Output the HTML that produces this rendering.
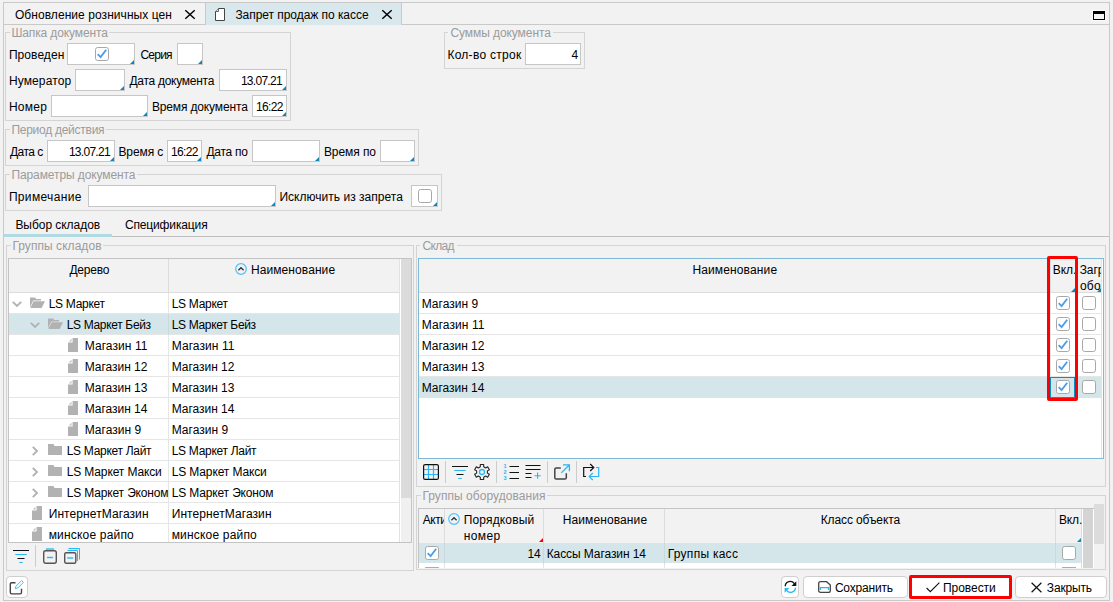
<!DOCTYPE html>
<html lang="ru"><head><meta charset="utf-8"><title>Запрет продаж по кассе</title>
<style>
html,body{margin:0;padding:0;background:#f2f2f2}
body{width:1113px;height:602px;background:#f2f2f2;position:relative;overflow:hidden;font-family:"Liberation Sans",sans-serif;font-size:12px;line-height:16px}
body div,body svg,.t{position:absolute}
.t{white-space:nowrap;display:block}
svg{overflow:visible}
</style></head><body>
<div style="left:3px;top:2px;width:1107px;height:599px;border:1px solid #c9c9c9;box-sizing:border-box"></div>
<div style="left:4px;top:24px;width:1105px;height:1px;background:#c9c9c9"></div>
<div style="left:205px;top:3px;width:1px;height:21px;background:#c9c9c9"></div>
<div style="left:401px;top:3px;width:1px;height:21px;background:#c9c9c9"></div>
<div style="left:206px;top:3px;width:195px;height:22px;background:#d8e8ed"></div>
<span id="t1" class="t" style="left:14.90px;top:6.84px;color:#000;letter-spacing:0.065px;">Обновление розничных цен</span>
<svg style="left:184px;top:9px" width="12" height="11" viewBox="0 0 12 11"><path d="M1.3 1.3L10.7 9.7M10.7 1.3L1.3 9.7" stroke="#000" stroke-width="1.45" fill="none"/></svg>
<svg style="left:215px;top:8px" width="10" height="13" viewBox="0 0 10 13"><path d="M3.5 0.5H9.5V12.5H0.5V3.5Z" fill="#fff" stroke="#444"/><path d="M0.5 3.5H3.5V0.5" fill="#ddd" stroke="#444" stroke-width="0.8"/></svg>
<span id="t2" class="t" style="left:235.40px;top:6.84px;color:#000;letter-spacing:-0.048px;">Запрет продаж по кассе</span>
<svg style="left:381px;top:9px" width="12" height="11" viewBox="0 0 12 11"><path d="M1.3 1.3L10.7 9.7M10.7 1.3L1.3 9.7" stroke="#000" stroke-width="1.45" fill="none"/></svg>
<div style="left:1093px;top:11px;width:12px;height:9px;border:1px solid #000;border-top:3px solid #000;box-sizing:border-box;background:#f6f6f6;box-shadow:0 0 0 1px #fafafa"></div>
<div style="left:5px;top:32px;width:286px;height:89px;border:1px solid #d4d4d4;box-sizing:border-box"></div>
<div style="left:10px;top:32px;width:99.3px;height:1px;background:#f2f2f2"></div>
<span id="t3" class="t" style="left:11.40px;top:24.84px;color:#9b9b9b;letter-spacing:-0.121px;">Шапка документа</span>
<span id="t4" class="t" style="left:8.90px;top:46.84px;color:#000;letter-spacing:0.071px;">Проведен</span>
<div style="left:67px;top:43px;width:68px;height:22px;border:1px solid #c6c6c6;box-sizing:border-box;background:#fff"></div>
<svg style="left:130px;top:60px" width="4" height="4" viewBox="0 0 4 4"><path d="M4 0V4H0Z" fill="#0c86c3"/></svg>
<svg style="left:95px;top:47px" width="14" height="14" viewBox="0 0 14 14"><rect x="0.5" y="0.5" width="13" height="13" rx="2.2" fill="#fff" stroke="#a8a8a8"/><path d="M2.7 7.2L5.6 10.1L11.2 2.8" fill="none" stroke="#4a9eea" stroke-width="1.85"/></svg>
<span id="t5" class="t" style="left:140.40px;top:46.84px;color:#000;letter-spacing:-0.750px;">Серия</span>
<div style="left:177px;top:43px;width:26px;height:22px;border:1px solid #c6c6c6;box-sizing:border-box;background:#fff"></div>
<svg style="left:198px;top:60px" width="4" height="4" viewBox="0 0 4 4"><path d="M4 0V4H0Z" fill="#0c86c3"/></svg>
<span id="t6" class="t" style="left:8.90px;top:72.84px;color:#000;letter-spacing:0.125px;">Нумератор</span>
<div style="left:75px;top:69px;width:50px;height:22px;border:1px solid #c6c6c6;box-sizing:border-box;background:#fff"></div>
<svg style="left:120px;top:86px" width="4" height="4" viewBox="0 0 4 4"><path d="M4 0V4H0Z" fill="#0c86c3"/></svg>
<span id="t7" class="t" style="left:129.40px;top:72.84px;color:#000;letter-spacing:-0.269px;">Дата документа</span>
<div style="left:219px;top:69px;width:68px;height:22px;border:1px solid #c6c6c6;box-sizing:border-box;background:#fff"></div>
<svg style="left:282px;top:86px" width="4" height="4" viewBox="0 0 4 4"><path d="M4 0V4H0Z" fill="#0c86c3"/></svg>
<span id="t8" class="t" style="left:240.90px;top:72.84px;color:#000;letter-spacing:-0.714px;">13.07.21</span>
<span id="t9" class="t" style="left:8.90px;top:98.84px;color:#000;letter-spacing:0.250px;">Номер</span>
<div style="left:51px;top:95px;width:97px;height:22px;border:1px solid #c6c6c6;box-sizing:border-box;background:#fff"></div>
<svg style="left:143px;top:112px" width="4" height="4" viewBox="0 0 4 4"><path d="M4 0V4H0Z" fill="#0c86c3"/></svg>
<span id="t10" class="t" style="left:151.90px;top:98.84px;color:#000;letter-spacing:-0.143px;">Время документа</span>
<div style="left:252px;top:95px;width:35px;height:22px;border:1px solid #c6c6c6;box-sizing:border-box;background:#fff"></div>
<svg style="left:282px;top:112px" width="4" height="4" viewBox="0 0 4 4"><path d="M4 0V4H0Z" fill="#0c86c3"/></svg>
<span id="t11" class="t" style="left:255.90px;top:98.84px;color:#000;letter-spacing:-0.625px;">16:22</span>
<div style="left:444px;top:32px;width:141px;height:37px;border:1px solid #d4d4d4;box-sizing:border-box"></div>
<div style="left:448px;top:32px;width:105px;height:1px;background:#f2f2f2"></div>
<span id="t12" class="t" style="left:450.40px;top:24.84px;color:#9b9b9b;letter-spacing:-0.071px;">Суммы документа</span>
<span id="t13" class="t" style="left:447.40px;top:46.84px;color:#000;letter-spacing:0.273px;">Кол-во строк</span>
<div style="left:525px;top:43px;width:56px;height:22px;border:1px solid #c6c6c6;box-sizing:border-box;background:#fff"></div>
<span id="t14" class="t" style="left:571.40px;top:46.84px;color:#000;">4</span>
<div style="left:5px;top:129px;width:414px;height:37px;border:1px solid #d4d4d4;box-sizing:border-box"></div>
<div style="left:10px;top:129px;width:96.3px;height:1px;background:#f2f2f2"></div>
<span id="t15" class="t" style="left:11.40px;top:121.84px;color:#9b9b9b;letter-spacing:-0.264px;">Период действия</span>
<span id="t16" class="t" style="left:9.90px;top:143.84px;color:#000;letter-spacing:-0.500px;">Дата с</span>
<div style="left:47px;top:140px;width:68px;height:22px;border:1px solid #c6c6c6;box-sizing:border-box;background:#fff"></div>
<svg style="left:110px;top:157px" width="4" height="4" viewBox="0 0 4 4"><path d="M4 0V4H0Z" fill="#0c86c3"/></svg>
<span id="t17" class="t" style="left:68.90px;top:143.84px;color:#000;letter-spacing:-0.714px;">13.07.21</span>
<span id="t18" class="t" style="left:118.40px;top:143.84px;color:#000;letter-spacing:-0.083px;">Время с</span>
<div style="left:167px;top:140px;width:35px;height:22px;border:1px solid #c6c6c6;box-sizing:border-box;background:#fff"></div>
<svg style="left:197px;top:157px" width="4" height="4" viewBox="0 0 4 4"><path d="M4 0V4H0Z" fill="#0c86c3"/></svg>
<span id="t19" class="t" style="left:170.90px;top:143.84px;color:#000;letter-spacing:-0.625px;">16:22</span>
<span id="t20" class="t" style="left:206.40px;top:143.84px;color:#000;letter-spacing:-0.250px;">Дата по</span>
<div style="left:252px;top:140px;width:68px;height:22px;border:1px solid #c6c6c6;box-sizing:border-box;background:#fff"></div>
<svg style="left:315px;top:157px" width="4" height="4" viewBox="0 0 4 4"><path d="M4 0V4H0Z" fill="#0c86c3"/></svg>
<span id="t21" class="t" style="left:323.90px;top:143.84px;color:#000;letter-spacing:-0.071px;">Время по</span>
<div style="left:380px;top:140px;width:35px;height:22px;border:1px solid #c6c6c6;box-sizing:border-box;background:#fff"></div>
<svg style="left:410px;top:157px" width="4" height="4" viewBox="0 0 4 4"><path d="M4 0V4H0Z" fill="#0c86c3"/></svg>
<div style="left:5px;top:174px;width:437px;height:37px;border:1px solid #d4d4d4;box-sizing:border-box"></div>
<div style="left:10px;top:174px;width:127.30000000000001px;height:1px;background:#f2f2f2"></div>
<span id="t22" class="t" style="left:11.40px;top:166.84px;color:#9b9b9b;letter-spacing:-0.094px;">Параметры документа</span>
<span id="t23" class="t" style="left:8.90px;top:188.84px;color:#000;letter-spacing:0.333px;">Примечание</span>
<div style="left:88px;top:185px;width:188px;height:22px;border:1px solid #c6c6c6;box-sizing:border-box;background:#fff"></div>
<svg style="left:271px;top:202px" width="4" height="4" viewBox="0 0 4 4"><path d="M4 0V4H0Z" fill="#0c86c3"/></svg>
<span id="t24" class="t" style="left:279.40px;top:188.84px;color:#000;letter-spacing:0.026px;">Исключить из запрета</span>
<div style="left:411px;top:185px;width:27px;height:22px;border:1px solid #c6c6c6;box-sizing:border-box;background:#fff"></div>
<svg style="left:433px;top:202px" width="4" height="4" viewBox="0 0 4 4"><path d="M4 0V4H0Z" fill="#0c86c3"/></svg>
<svg style="left:418px;top:189px" width="14" height="14" viewBox="0 0 14 14"><rect x="0.5" y="0.5" width="13" height="13" rx="2.2" fill="#fff" stroke="#a8a8a8"/></svg>
<span id="t25" class="t" style="left:15.40px;top:216.84px;color:#000;letter-spacing:-0.042px;">Выбор складов</span>
<span id="t26" class="t" style="left:124.90px;top:216.84px;color:#000;letter-spacing:-0.136px;">Спецификация</span>
<div style="left:4px;top:236px;width:1105px;height:1px;background:#bfbfbf"></div>
<div style="left:4px;top:234px;width:108px;height:3px;background:#b0dbe2"></div>
<div style="left:6px;top:245px;width:408px;height:326px;border:1px solid #d4d4d4;box-sizing:border-box"></div>
<div style="left:11px;top:245px;width:91.7px;height:1px;background:#f2f2f2"></div>
<span id="t27" class="t" style="left:12.40px;top:237.84px;color:#9b9b9b;letter-spacing:0.054px;">Группы складов</span>
<div style="left:8px;top:258px;width:404px;height:285px;background:#fff;border:1px solid #c4c4c4;box-sizing:border-box"></div>
<div style="left:9px;top:259px;width:390px;height:34px;background:#f2f2f2"></div>
<div style="left:399px;top:259px;width:1px;height:283px;background:#e2e2e2"></div>
<div style="left:9px;top:292px;width:390px;height:1px;background:#dcdcdc"></div>
<div style="left:168px;top:259px;width:1px;height:34px;background:#dcdcdc"></div>
<span id="t28" class="t" style="left:69.40px;top:261.84px;color:#000;letter-spacing:-0.200px;">Дерево</span>
<svg style="left:235px;top:263px" width="12" height="12" viewBox="0 0 12 12"><circle cx="6" cy="6" r="5.3" fill="none" stroke="#4fc3f7" stroke-width="1.2"/><path d="M3.4 7.3L6 4.7L8.6 7.3" fill="none" stroke="#333" stroke-width="1.3"/></svg>
<span id="t29" class="t" style="left:250.90px;top:261.84px;color:#000;letter-spacing:0.091px;">Наименование</span>
<div style="left:401px;top:259px;width:10px;height:283px;background:#f0f0f0"></div>
<div style="left:401px;top:259px;width:10px;height:239px;background:#dbdbdb"></div>
<div style="left:9px;top:313px;width:390px;height:1px;background:#e6e6e6"></div>
<div style="left:168px;top:293px;width:1px;height:21px;background:#e6e6e6"></div>
<svg style="left:11.5px;top:301px" width="10" height="7" viewBox="0 0 10 7"><path d="M0.8 0.8L5 5L9.2 0.8" fill="none" stroke="#b2b2b2" stroke-width="1.9"/></svg>
<svg style="left:30px;top:297px" width="15" height="11" viewBox="0 0 15 11"><path d="M0 0.5H5L6.3 2H11V3.6H3.2L0 10.2Z" fill="#b2b2b2"/><path d="M3.6 4.2H15L11.6 11H0.3Z" fill="#b2b2b2"/></svg>
<span id="t30" class="t" style="left:48.70px;top:295.84px;color:#000;letter-spacing:-0.287px;">LS Маркет</span>
<span id="t31" class="t" style="left:171.70px;top:295.84px;color:#000;letter-spacing:-0.288px;">LS Маркет</span>
<div style="left:9px;top:314px;width:390px;height:21px;background:#d5e6eb"></div>
<div style="left:9px;top:334px;width:390px;height:1px;background:#e6e6e6"></div>
<div style="left:168px;top:314px;width:1px;height:21px;background:#c8dade"></div>
<svg style="left:29.5px;top:322px" width="10" height="7" viewBox="0 0 10 7"><path d="M0.8 0.8L5 5L9.2 0.8" fill="none" stroke="#b2b2b2" stroke-width="1.9"/></svg>
<svg style="left:48px;top:318px" width="15" height="11" viewBox="0 0 15 11"><path d="M0 0.5H5L6.3 2H11V3.6H3.2L0 10.2Z" fill="#b2b2b2"/><path d="M3.6 4.2H15L11.6 11H0.3Z" fill="#b2b2b2"/></svg>
<span id="t32" class="t" style="left:66.70px;top:316.84px;color:#000;letter-spacing:-0.331px;">LS Маркет Бейз</span>
<span id="t33" class="t" style="left:171.70px;top:316.84px;color:#000;letter-spacing:-0.331px;">LS Маркет Бейз</span>
<div style="left:9px;top:355px;width:390px;height:1px;background:#e6e6e6"></div>
<div style="left:168px;top:335px;width:1px;height:21px;background:#e6e6e6"></div>
<svg style="left:68px;top:338px" width="10" height="14" viewBox="0 0 10 14"><path d="M4.6 0H10V14H0V4.6H4.6Z" fill="#b2b2b2"/><path d="M3.6 0.7V3.6H0.7Z" fill="#c4c4c4"/></svg>
<span id="t34" class="t" style="left:84.70px;top:337.84px;color:#000;letter-spacing:0.078px;">Магазин 11</span>
<span id="t35" class="t" style="left:171.70px;top:337.84px;color:#000;letter-spacing:0.078px;">Магазин 11</span>
<div style="left:9px;top:376px;width:390px;height:1px;background:#e6e6e6"></div>
<div style="left:168px;top:356px;width:1px;height:21px;background:#e6e6e6"></div>
<svg style="left:68px;top:359px" width="10" height="14" viewBox="0 0 10 14"><path d="M4.6 0H10V14H0V4.6H4.6Z" fill="#b2b2b2"/><path d="M3.6 0.7V3.6H0.7Z" fill="#c4c4c4"/></svg>
<span id="t36" class="t" style="left:84.70px;top:358.84px;color:#000;letter-spacing:-0.033px;">Магазин 12</span>
<span id="t37" class="t" style="left:171.70px;top:358.84px;color:#000;letter-spacing:-0.033px;">Магазин 12</span>
<div style="left:9px;top:397px;width:390px;height:1px;background:#e6e6e6"></div>
<div style="left:168px;top:377px;width:1px;height:21px;background:#e6e6e6"></div>
<svg style="left:68px;top:380px" width="10" height="14" viewBox="0 0 10 14"><path d="M4.6 0H10V14H0V4.6H4.6Z" fill="#b2b2b2"/><path d="M3.6 0.7V3.6H0.7Z" fill="#c4c4c4"/></svg>
<span id="t38" class="t" style="left:84.70px;top:379.84px;color:#000;letter-spacing:-0.033px;">Магазин 13</span>
<span id="t39" class="t" style="left:171.70px;top:379.84px;color:#000;letter-spacing:-0.033px;">Магазин 13</span>
<div style="left:9px;top:418px;width:390px;height:1px;background:#e6e6e6"></div>
<div style="left:168px;top:398px;width:1px;height:21px;background:#e6e6e6"></div>
<svg style="left:68px;top:401px" width="10" height="14" viewBox="0 0 10 14"><path d="M4.6 0H10V14H0V4.6H4.6Z" fill="#b2b2b2"/><path d="M3.6 0.7V3.6H0.7Z" fill="#c4c4c4"/></svg>
<span id="t40" class="t" style="left:84.70px;top:400.84px;color:#000;letter-spacing:-0.033px;">Магазин 14</span>
<span id="t41" class="t" style="left:171.70px;top:400.84px;color:#000;letter-spacing:-0.033px;">Магазин 14</span>
<div style="left:9px;top:439px;width:390px;height:1px;background:#e6e6e6"></div>
<div style="left:168px;top:419px;width:1px;height:21px;background:#e6e6e6"></div>
<svg style="left:68px;top:422px" width="10" height="14" viewBox="0 0 10 14"><path d="M4.6 0H10V14H0V4.6H4.6Z" fill="#b2b2b2"/><path d="M3.6 0.7V3.6H0.7Z" fill="#c4c4c4"/></svg>
<span id="t42" class="t" style="left:84.70px;top:421.84px;color:#000;letter-spacing:0.025px;">Магазин 9</span>
<span id="t43" class="t" style="left:171.70px;top:421.84px;color:#000;letter-spacing:0.025px;">Магазин 9</span>
<div style="left:9px;top:460px;width:390px;height:1px;background:#e6e6e6"></div>
<div style="left:168px;top:440px;width:1px;height:21px;background:#e6e6e6"></div>
<svg style="left:32px;top:446px" width="7" height="10" viewBox="0 0 7 10"><path d="M0.8 0.8L5 5L0.8 9.2" fill="none" stroke="#b2b2b2" stroke-width="1.9"/></svg>
<svg style="left:48px;top:444px" width="14" height="11" viewBox="0 0 14 11"><path d="M0 0H5.5L6.5 2H14V11H0Z" fill="#b2b2b2"/></svg>
<span id="t44" class="t" style="left:66.70px;top:442.84px;color:#000;letter-spacing:-0.292px;">LS Маркет Лайт</span>
<span id="t45" class="t" style="left:171.70px;top:442.84px;color:#000;letter-spacing:-0.292px;">LS Маркет Лайт</span>
<div style="left:9px;top:481px;width:390px;height:1px;background:#e6e6e6"></div>
<div style="left:168px;top:461px;width:1px;height:21px;background:#e6e6e6"></div>
<svg style="left:32px;top:467px" width="7" height="10" viewBox="0 0 7 10"><path d="M0.8 0.8L5 5L0.8 9.2" fill="none" stroke="#b2b2b2" stroke-width="1.9"/></svg>
<svg style="left:48px;top:465px" width="14" height="11" viewBox="0 0 14 11"><path d="M0 0H5.5L6.5 2H14V11H0Z" fill="#b2b2b2"/></svg>
<span id="t46" class="t" style="left:66.70px;top:463.84px;color:#000;letter-spacing:-0.129px;">LS Маркет Макси</span>
<span id="t47" class="t" style="left:171.70px;top:463.84px;color:#000;letter-spacing:-0.129px;">LS Маркет Макси</span>
<div style="left:9px;top:502px;width:390px;height:1px;background:#e6e6e6"></div>
<div style="left:168px;top:482px;width:1px;height:21px;background:#e6e6e6"></div>
<svg style="left:32px;top:488px" width="7" height="10" viewBox="0 0 7 10"><path d="M0.8 0.8L5 5L0.8 9.2" fill="none" stroke="#b2b2b2" stroke-width="1.9"/></svg>
<svg style="left:48px;top:486px" width="14" height="11" viewBox="0 0 14 11"><path d="M0 0H5.5L6.5 2H14V11H0Z" fill="#b2b2b2"/></svg>
<span id="t48" class="t" style="left:66.70px;top:484.84px;color:#000;letter-spacing:-0.153px;">LS Маркет Эконом</span>
<span id="t49" class="t" style="left:171.70px;top:484.84px;color:#000;letter-spacing:-0.153px;">LS Маркет Эконом</span>
<div style="left:9px;top:523px;width:390px;height:1px;background:#e6e6e6"></div>
<div style="left:168px;top:503px;width:1px;height:21px;background:#e6e6e6"></div>
<svg style="left:32px;top:506px" width="10" height="14" viewBox="0 0 10 14"><path d="M4.6 0H10V14H0V4.6H4.6Z" fill="#b2b2b2"/><path d="M3.6 0.7V3.6H0.7Z" fill="#c4c4c4"/></svg>
<span id="t50" class="t" style="left:48.70px;top:505.84px;color:#000;letter-spacing:0.086px;">ИнтернетМагазин</span>
<span id="t51" class="t" style="left:171.70px;top:505.84px;color:#000;letter-spacing:0.086px;">ИнтернетМагазин</span>
<div style="left:168px;top:524px;width:1px;height:18px;background:#e6e6e6"></div>
<svg style="left:32px;top:527px" width="10" height="14" viewBox="0 0 10 14"><path d="M4.6 0H10V14H0V4.6H4.6Z" fill="#b2b2b2"/><path d="M3.6 0.7V3.6H0.7Z" fill="#c4c4c4"/></svg>
<span id="t52" class="t" style="left:48.70px;top:526.84px;color:#000;letter-spacing:0.183px;">минское райпо</span>
<span id="t53" class="t" style="left:171.70px;top:526.84px;color:#000;letter-spacing:0.183px;">минское райпо</span>
<div style="left:8px;top:542px;width:404px;height:1px;background:#c4c4c4"></div>
<div style="left:8px;top:543px;width:404px;height:5px;background:#f2f2f2"></div>
<svg style="left:13px;top:549px" width="16" height="14" viewBox="0 0 16 14"><path d="M0 1.5H16M4.5 9.5H11.5" stroke="#111" stroke-width="1" fill="none"/><path d="M2.3 5.5H13.7M6.3 13.5H9.7" stroke="#29b6f6" stroke-width="1" fill="none"/></svg>
<div style="left:35px;top:545px;width:1px;height:22px;background:#cccccc"></div>
<svg style="left:43px;top:548px" width="14" height="16" viewBox="0 0 14 16"><rect x="3" y="0" width="8" height="2" fill="#6ccaf3"/><rect x="0.7" y="2.7" width="12.6" height="12.6" rx="2" fill="none" stroke="#555" stroke-width="1.4"/><path d="M4 9.5H10" stroke="#29b6f6" stroke-width="1.4"/></svg>
<svg style="left:64px;top:548px" width="16" height="16" viewBox="0 0 16 16"><path d="M4.5 0.5H15.5V11.5M3.5 2.5H13.5V13" fill="none" stroke="#29b6f6" stroke-width="1"/><rect x="0.7" y="4.7" width="11.1" height="10.6" rx="1.5" fill="#f2f2f2" stroke="#555" stroke-width="1.4"/><path d="M3.2 10H9.2" stroke="#29b6f6" stroke-width="1.4"/></svg>
<div style="left:6px;top:576px;width:22px;height:22px;background:#fff;border:1px solid #cfcfcf;border-radius:4px;box-sizing:border-box"></div>
<svg style="left:9px;top:579px" width="16" height="16" viewBox="0 0 16 16"><path d="M6.5 3.7H2.7Q1.3 3.7 1.3 5.1V13.5Q1.3 14.9 2.7 14.9H11.1Q12.5 14.9 12.5 13.5V9.7" fill="none" stroke="#444" stroke-width="1.4"/><path d="M6.3 9.6L7 7.2L12.6 1.6L14.4 3.4L8.8 9Z" fill="#fff" stroke="#29b6f6" stroke-width="0.9"/></svg>
<div style="left:416px;top:245px;width:690px;height:242px;border:1px solid #d4d4d4;box-sizing:border-box"></div>
<div style="left:420px;top:245px;width:36.5px;height:1px;background:#f2f2f2"></div>
<span id="t54" class="t" style="left:422.40px;top:237.84px;color:#9b9b9b;letter-spacing:-0.625px;">Склад</span>
<div style="left:418px;top:258px;width:686px;height:201px;background:#fff;border:1px solid #7fb9d4;box-sizing:border-box"></div>
<div style="left:419px;top:259px;width:683px;height:33px;background:#f2f2f2"></div>
<div style="left:419px;top:292px;width:683px;height:1px;background:#dcdcdc"></div>
<div style="left:1050px;top:259px;width:1px;height:34px;background:#dcdcdc"></div>
<div style="left:1077px;top:259px;width:1px;height:34px;background:#dcdcdc"></div>
<div style="left:1101px;top:259px;width:1px;height:199px;background:#e4e4e4"></div>
<span id="t55" class="t" style="left:692.40px;top:261.84px;color:#000;letter-spacing:0.136px;">Наименование</span>
<div style="left:1051px;top:261.84px;width:26px;height:16px;overflow:hidden"><span id="t56" class="t" style="left:1.70px;top:0;color:#000;">Вкл.</span></div>
<div style="left:1078px;top:261.84px;width:23px;height:16px;overflow:hidden"><span id="t57" class="t" style="left:1.70px;top:0;color:#000;letter-spacing:-0.100px;">Загр</span></div>
<div style="left:1078px;top:277.84px;width:23px;height:16px;overflow:hidden"><span id="t58" class="t" style="left:1.90px;top:0;color:#000;letter-spacing:0.250px;">обо</span></div>
<svg style="left:1071px;top:288px" width="4" height="4" viewBox="0 0 4 4"><path d="M4 0V4H0Z" fill="#0c86c3"/></svg>
<svg style="left:1097px;top:288px" width="4" height="4" viewBox="0 0 4 4"><path d="M4 0V4H0Z" fill="#0c86c3"/></svg>
<div style="left:419px;top:313px;width:682px;height:1px;background:#e6e6e6"></div>
<div style="left:1050px;top:293px;width:1px;height:20px;background:#e6e6e6"></div>
<div style="left:1077px;top:293px;width:1px;height:20px;background:#e6e6e6"></div>
<span id="t59" class="t" style="left:421.70px;top:295.84px;color:#000;letter-spacing:0.025px;">Магазин 9</span>
<svg style="left:1056px;top:296px" width="14" height="14" viewBox="0 0 14 14"><rect x="0.5" y="0.5" width="13" height="13" rx="2.2" fill="#fff" stroke="#a8a8a8"/><path d="M2.7 7.2L5.6 10.1L11.2 2.8" fill="none" stroke="#4a9eea" stroke-width="1.85"/></svg>
<svg style="left:1082px;top:296px" width="14" height="14" viewBox="0 0 14 14"><rect x="0.5" y="0.5" width="13" height="13" rx="2.2" fill="#fff" stroke="#a8a8a8"/></svg>
<div style="left:419px;top:334px;width:682px;height:1px;background:#e6e6e6"></div>
<div style="left:1050px;top:314px;width:1px;height:20px;background:#e6e6e6"></div>
<div style="left:1077px;top:314px;width:1px;height:20px;background:#e6e6e6"></div>
<span id="t60" class="t" style="left:421.70px;top:316.84px;color:#000;letter-spacing:0.078px;">Магазин 11</span>
<svg style="left:1056px;top:317px" width="14" height="14" viewBox="0 0 14 14"><rect x="0.5" y="0.5" width="13" height="13" rx="2.2" fill="#fff" stroke="#a8a8a8"/><path d="M2.7 7.2L5.6 10.1L11.2 2.8" fill="none" stroke="#4a9eea" stroke-width="1.85"/></svg>
<svg style="left:1082px;top:317px" width="14" height="14" viewBox="0 0 14 14"><rect x="0.5" y="0.5" width="13" height="13" rx="2.2" fill="#fff" stroke="#a8a8a8"/></svg>
<div style="left:419px;top:355px;width:682px;height:1px;background:#e6e6e6"></div>
<div style="left:1050px;top:335px;width:1px;height:20px;background:#e6e6e6"></div>
<div style="left:1077px;top:335px;width:1px;height:20px;background:#e6e6e6"></div>
<span id="t61" class="t" style="left:421.70px;top:337.84px;color:#000;letter-spacing:-0.033px;">Магазин 12</span>
<svg style="left:1056px;top:338px" width="14" height="14" viewBox="0 0 14 14"><rect x="0.5" y="0.5" width="13" height="13" rx="2.2" fill="#fff" stroke="#a8a8a8"/><path d="M2.7 7.2L5.6 10.1L11.2 2.8" fill="none" stroke="#4a9eea" stroke-width="1.85"/></svg>
<svg style="left:1082px;top:338px" width="14" height="14" viewBox="0 0 14 14"><rect x="0.5" y="0.5" width="13" height="13" rx="2.2" fill="#fff" stroke="#a8a8a8"/></svg>
<div style="left:419px;top:376px;width:682px;height:1px;background:#e6e6e6"></div>
<div style="left:1050px;top:356px;width:1px;height:20px;background:#e6e6e6"></div>
<div style="left:1077px;top:356px;width:1px;height:20px;background:#e6e6e6"></div>
<span id="t62" class="t" style="left:421.70px;top:358.84px;color:#000;letter-spacing:-0.033px;">Магазин 13</span>
<svg style="left:1056px;top:359px" width="14" height="14" viewBox="0 0 14 14"><rect x="0.5" y="0.5" width="13" height="13" rx="2.2" fill="#fff" stroke="#a8a8a8"/><path d="M2.7 7.2L5.6 10.1L11.2 2.8" fill="none" stroke="#4a9eea" stroke-width="1.85"/></svg>
<svg style="left:1082px;top:359px" width="14" height="14" viewBox="0 0 14 14"><rect x="0.5" y="0.5" width="13" height="13" rx="2.2" fill="#fff" stroke="#a8a8a8"/></svg>
<div style="left:419px;top:377px;width:682px;height:21px;background:#d5e6eb"></div>
<div style="left:1050px;top:377px;width:25px;height:21px;border:1px solid #0a8ec6;box-sizing:border-box"></div>
<span id="t63" class="t" style="left:421.70px;top:379.84px;color:#000;letter-spacing:-0.033px;">Магазин 14</span>
<svg style="left:1056px;top:380px" width="14" height="14" viewBox="0 0 14 14"><rect x="0.5" y="0.5" width="13" height="13" rx="2.2" fill="#fff" stroke="#a8a8a8"/><path d="M2.7 7.2L5.6 10.1L11.2 2.8" fill="none" stroke="#4a9eea" stroke-width="1.85"/></svg>
<svg style="left:1082px;top:380px" width="14" height="14" viewBox="0 0 14 14"><rect x="0.5" y="0.5" width="13" height="13" rx="2.2" fill="#fff" stroke="#a8a8a8"/></svg>
<div style="left:1047px;top:256px;width:31px;height:145px;border:3px solid #ff0000;border-radius:2px;box-sizing:border-box"></div>
<svg style="left:423px;top:464px" width="16" height="16" viewBox="0 0 16 16"><path d="M5.5 1V15M10.5 1V15M1 5.5H15M1 10.5H15" stroke="#29b6f6" stroke-width="1.2" fill="none"/><rect x="0.6" y="0.6" width="14.8" height="14.8" rx="1.5" fill="none" stroke="#111" stroke-width="1.2"/></svg>
<div style="left:445px;top:461px;width:1px;height:22px;background:#cccccc"></div>
<svg style="left:452px;top:465px" width="16" height="14" viewBox="0 0 16 14"><path d="M0 1.5H16M4.5 9.5H11.5" stroke="#111" stroke-width="1" fill="none"/><path d="M2.3 5.5H13.7M6.3 13.5H9.7" stroke="#29b6f6" stroke-width="1" fill="none"/></svg>
<svg style="left:474px;top:464px" width="16" height="16" viewBox="0 0 16 16"><path d="M6.32 0.49L9.68 0.49L9.70 2.77L11.68 3.91L13.67 2.79L15.35 5.70L13.38 6.86L13.38 9.14L15.35 10.30L13.67 13.21L11.68 12.09L9.70 13.23L9.68 15.51L6.32 15.51L6.30 13.23L4.32 12.09L2.33 13.21L0.65 10.30L2.62 9.14L2.62 6.86L0.65 5.70L2.33 2.79L4.32 3.91L6.30 2.77Z" fill="none" stroke="#222" stroke-width="1.1" stroke-linejoin="round"/><circle cx="8" cy="8" r="2.5" fill="none" stroke="#29b6f6" stroke-width="1.3"/></svg>
<div style="left:496px;top:461px;width:1px;height:22px;background:#cccccc"></div>
<svg style="left:503px;top:464px" width="16" height="16" viewBox="0 0 16 16"><path d="M6.5 2.5H16M6.5 8.5H16M6.5 14.5H16" stroke="#111" stroke-width="1.1" fill="none"/><g fill="#29b6f6" font-family="Liberation Sans,sans-serif" font-size="5.5" font-weight="bold"><text x="0.6" y="4">1</text><text x="0.6" y="10">2</text><text x="0.6" y="16">3</text></g></svg>
<svg style="left:525px;top:464px" width="16" height="16" viewBox="0 0 16 16"><path d="M0.5 1.5H15.5M0.5 5.5H15.5M0.5 9.5H6.5M0.5 13.5H6.5" stroke="#111" stroke-width="1.1" fill="none"/><path d="M9.5 11.7H15.7M12.6 8.6V14.8" stroke="#29b6f6" stroke-width="1.1" fill="none"/></svg>
<div style="left:547px;top:461px;width:1px;height:22px;background:#cccccc"></div>
<svg style="left:554px;top:463px" width="16" height="17" viewBox="0 0 16 17"><path d="M6.8 5H2.2Q0.8 5 0.8 6.4V14.7Q0.8 16.1 2.2 16.1H10.9Q12.3 16.1 12.3 14.7V10.2" fill="none" stroke="#444" stroke-width="1.5"/><path d="M7.3 9.9L15 2.2M9 1.8H15.4V8.2" fill="none" stroke="#29b6f6" stroke-width="1.3"/></svg>
<div style="left:576px;top:461px;width:1px;height:22px;background:#cccccc"></div>
<svg style="left:583px;top:463px" width="17" height="18" viewBox="0 0 17 18"><path d="M3 13.5H0.7V4.5H10.5M7.2 1L10.8 4.5L7.2 8" fill="none" stroke="#111" stroke-width="1.2"/><path d="M13 4.5H15.7V13.5H6.5M9.8 10L6.2 13.5L9.8 17" fill="none" stroke="#29b6f6" stroke-width="1.2"/></svg>
<div style="left:416px;top:495px;width:690px;height:75px;border:1px solid #d4d4d4;box-sizing:border-box"></div>
<div style="left:421px;top:495px;width:126px;height:1px;background:#f2f2f2"></div>
<span id="t64" class="t" style="left:422.40px;top:487.84px;color:#9b9b9b;letter-spacing:0.056px;">Группы оборудования</span>
<div style="left:418px;top:508px;width:676px;height:60px;background:#fff"></div>
<div style="left:418px;top:508px;width:676px;height:1px;background:#c4c4c4"></div>
<div style="left:418px;top:508px;width:1px;height:60px;background:#c4c4c4"></div>
<div style="left:419px;top:509px;width:662px;height:34px;background:#f2f2f2"></div>
<div style="left:444px;top:509px;width:1px;height:34px;background:#dcdcdc"></div>
<div style="left:543px;top:509px;width:1px;height:34px;background:#dcdcdc"></div>
<div style="left:664px;top:509px;width:1px;height:34px;background:#dcdcdc"></div>
<div style="left:1055px;top:509px;width:1px;height:34px;background:#dcdcdc"></div>
<div style="left:1081px;top:509px;width:1px;height:59px;background:#dcdcdc"></div>
<div style="left:420px;top:511.84px;width:24px;height:16px;overflow:hidden"><span id="t65" class="t" style="left:2.70px;top:0;color:#000;letter-spacing:-0.433px;">Акти</span></div>
<svg style="left:448px;top:513px" width="12" height="12" viewBox="0 0 12 12"><circle cx="6" cy="6" r="5.3" fill="none" stroke="#4fc3f7" stroke-width="1.2"/><path d="M3.4 7.3L6 4.7L8.6 7.3" fill="none" stroke="#333" stroke-width="1.3"/></svg>
<span id="t66" class="t" style="left:463.70px;top:511.84px;color:#000;letter-spacing:0.156px;">Порядковый</span>
<span id="t67" class="t" style="left:463.70px;top:527.84px;color:#000;letter-spacing:0.425px;">номер</span>
<svg style="left:539px;top:538px" width="4" height="4" viewBox="0 0 4 4"><path d="M4 0V4H0Z" fill="#f00000"/></svg>
<span id="t68" class="t" style="left:562.70px;top:511.84px;color:#000;letter-spacing:0.109px;">Наименование</span>
<span id="t69" class="t" style="left:820.70px;top:511.84px;color:#000;letter-spacing:-0.108px;">Класс объекта</span>
<div style="left:1056px;top:511.84px;width:26px;height:16px;overflow:hidden"><span id="t70" class="t" style="left:2.90px;top:0;color:#000;letter-spacing:-0.100px;">Вкл.</span></div>
<svg style="left:1077px;top:538px" width="4" height="4" viewBox="0 0 4 4"><path d="M4 0V4H0Z" fill="#0c86c3"/></svg>
<div style="left:419px;top:543px;width:662px;height:20px;background:#d5e6eb"></div>
<div style="left:444px;top:543px;width:1px;height:21px;background:#c8dade"></div>
<div style="left:444px;top:564px;width:1px;height:4px;background:#e6e6e6"></div>
<div style="left:543px;top:543px;width:1px;height:21px;background:#c8dade"></div>
<div style="left:543px;top:564px;width:1px;height:4px;background:#e6e6e6"></div>
<div style="left:664px;top:543px;width:1px;height:21px;background:#c8dade"></div>
<div style="left:664px;top:564px;width:1px;height:4px;background:#e6e6e6"></div>
<div style="left:1055px;top:543px;width:1px;height:21px;background:#c8dade"></div>
<div style="left:1055px;top:564px;width:1px;height:4px;background:#e6e6e6"></div>
<svg style="left:425px;top:546px" width="14" height="14" viewBox="0 0 14 14"><rect x="0.5" y="0.5" width="13" height="13" rx="2.2" fill="#fff" stroke="#a8a8a8"/><path d="M2.7 7.2L5.6 10.1L11.2 2.8" fill="none" stroke="#4a9eea" stroke-width="1.85"/></svg>
<span id="t71" class="t" style="left:527.40px;top:546.34px;color:#000;">14</span>
<span id="t72" class="t" style="left:546.70px;top:546.34px;color:#000;letter-spacing:-0.087px;">Кассы Магазин 14</span>
<span id="t73" class="t" style="left:667.70px;top:546.34px;color:#000;letter-spacing:0.270px;">Группы касс</span>
<svg style="left:1062px;top:546px" width="14" height="14" viewBox="0 0 14 14"><rect x="0.5" y="0.5" width="13" height="13" rx="2.2" fill="#fff" stroke="#a8a8a8"/></svg>
<div style="left:425px;top:567px;width:14px;height:1px;background:#ababab;border-radius:2px"></div>
<div style="left:1062px;top:567px;width:14px;height:1px;background:#ababab"></div>
<div style="left:1083px;top:509px;width:10px;height:59px;background:#d4d4d4"></div>
<div style="left:1094px;top:504px;width:10px;height:40px;background:#dcdcdc"></div>
<div style="left:781px;top:576px;width:18px;height:22px;background:#fff;border:1px solid #cfcfcf;border-radius:4px;box-sizing:border-box"></div>
<svg style="left:784px;top:580px" width="13" height="14" viewBox="0 0 13 14"><path d="M1.2 6.2A5 5 0 0 1 10.3 3.6" fill="none" stroke="#111" stroke-width="1.3"/><path d="M12.3 1.2V6H7.5Z" fill="#111"/><path d="M11.6 7.6A5 5 0 0 1 2.6 10.3" fill="none" stroke="#29b6f6" stroke-width="1.3"/><path d="M0.6 12.8V8H5.4Z" fill="#29b6f6"/></svg>
<div style="left:803px;top:576px;width:105px;height:22px;background:#fff;border:1px solid #cfcfcf;border-radius:4px;box-sizing:border-box"></div>
<svg style="left:818px;top:581px" width="13" height="12" viewBox="0 0 13 12"><path d="M2.6 0.7H8.6L12.3 4V9.4Q12.3 11.3 10.4 11.3H2.6Q0.7 11.3 0.7 9.4V2.6Q0.7 0.7 2.6 0.7Z" fill="none" stroke="#444" stroke-width="1.3"/><path d="M2.5 9V6.6H10.5V9" fill="none" stroke="#29b6f6" stroke-width="1.2"/></svg>
<span id="t74" class="t" style="left:834.90px;top:580.34px;color:#000;letter-spacing:-0.188px;">Сохранить</span>
<div style="left:910px;top:576px;width:101px;height:22px;background:#fff;border:1px solid #cfcfcf;border-radius:4px;box-sizing:border-box"></div>
<svg style="left:926px;top:582px" width="14" height="11" viewBox="0 0 14 11"><path d="M0.6 6L4.3 9.7L13.4 0.6" fill="none" stroke="#111" stroke-width="1.1"/></svg>
<span id="t75" class="t" style="left:942.90px;top:580.34px;color:#000;letter-spacing:-0.029px;">Провести</span>
<div style="left:909px;top:575px;width:103px;height:24px;border:3px solid #ff0000;border-radius:2px;box-sizing:border-box"></div>
<div style="left:1015px;top:576px;width:92px;height:22px;background:#fff;border:1px solid #cfcfcf;border-radius:4px;box-sizing:border-box"></div>
<svg style="left:1031px;top:582px" width="11" height="11" viewBox="0 0 11 11"><path d="M0.6 0.8L10.4 10.2M10.4 0.8L0.6 10.2" fill="none" stroke="#111" stroke-width="1.2"/></svg>
<span id="t76" class="t" style="left:1046.80px;top:580.34px;color:#000;letter-spacing:-0.167px;">Закрыть</span>
</body></html>
